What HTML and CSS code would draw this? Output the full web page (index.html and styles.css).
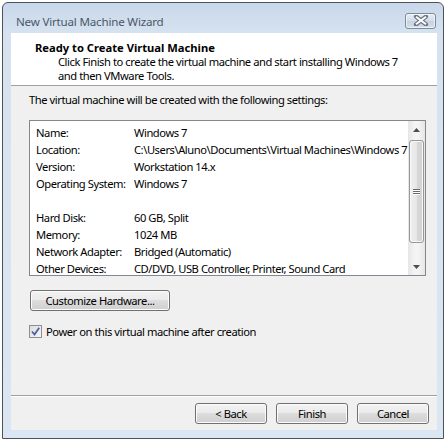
FILE: index.html
```html
<!DOCTYPE html>
<html>
<head>
<meta charset="utf-8">
<link rel="stylesheet" href="styles.css">
</head>
<body>
<div class="window">
  <div class="titlebar">
    <span class="title">New Virtual Machine Wizard</span>
    <span class="close">
      <svg width="16" height="11" viewBox="0 0 16 11"><path d="M3 1.5 L13 9.5 M13 1.5 L3 9.5" fill="none" stroke="#6d7684" stroke-width="4.2" stroke-linecap="round"/><path d="M3 1.8 L13 9.2 M13 1.8 L3 9.2" fill="none" stroke="#ffffff" stroke-width="2"/></svg>
    </span>
  </div>
  <div class="client">
    <div class="header">
      <div class="h-title">Ready to Create Virtual Machine</div>
      <div class="h-desc">Click Finish to create the virtual machine and start installing Windows 7<br>and then VMware Tools.</div>
    </div>
    <div class="body">
      <div class="intro">The virtual machine will be created with the following settings:</div>
      <div class="listbox">
        <div class="rows">
          <div class="row"><span class="lbl">Name:</span><span>Windows 7</span></div>
          <div class="row"><span class="lbl">Location:</span><span>C:\Users\Aluno\Documents\Virtual Machines\Windows 7</span></div>
          <div class="row"><span class="lbl">Version:</span><span>Workstation 14.x</span></div>
          <div class="row"><span class="lbl">Operating System:</span><span>Windows 7</span></div>
          <div class="row"></div>
          <div class="row"><span class="lbl">Hard Disk:</span><span>60 GB, Split</span></div>
          <div class="row"><span class="lbl">Memory:</span><span>1024 MB</span></div>
          <div class="row"><span class="lbl">Network Adapter:</span><span>Bridged (Automatic)</span></div>
          <div class="row"><span class="lbl">Other Devices:</span><span>CD/DVD, USB Controller, Printer, Sound Card</span></div>
        </div>
        <div class="scrollbar">
          <div class="arrow"><svg width="7" height="4" viewBox="0 0 7 4"><path d="M0 4 L3.5 0 L7 4Z" fill="#4d4d4d"/></svg></div>
          <div class="thumb"><span class="grip"></span><span class="grip"></span><span class="grip"></span></div>
          <div class="track"></div>
          <div class="arrow"><svg width="7" height="4" viewBox="0 0 7 4"><path d="M0 0 L3.5 4 L7 0Z" fill="#4d4d4d"/></svg></div>
        </div>
      </div>
      <button class="btn custom">Customize Hardware...</button>
      <label class="check">
        <span class="box"><svg width="11" height="11" viewBox="0 0 11 11"><path d="M2 5.5 L4.5 8.5 L9.2 1.8" fill="none" stroke="#4c61a8" stroke-width="1.8"/></svg></span>
        <span>Power on this virtual machine after creation</span>
      </label>
      <div class="footer">
        <button class="btn">&lt; Back</button>
        <button class="btn">Finish</button>
        <button class="btn">Cancel</button>
      </div>
    </div>
  </div>
</div>
</body>
</html>
```
FILE: styles.css
```css
html, body {
  margin: 0;
  padding: 0;
  background: #ffffff;
}
body {
  font-family: "Segoe UI", "Noto Sans", sans-serif;
  font-size: 11.2px;
  letter-spacing: -0.45px;
  color: #000;
}
.window {
  margin: 2px 0 0 2px;
  width: 440px;
  height: 435px;
  border: 1px solid #4e5358;
  border-radius: 6px 6px 0 0;
  background: linear-gradient(#c8d8ea 0px, #d6e2f0 30px, #dbe6f3 100%);
  display: flex;
  flex-direction: column;
}
.titlebar {
  height: 30px;
  display: flex;
  align-items: center;
  padding: 0 7px 0 13px;
}
.title {
  flex: 1;
  color: #4a586a;
  font-size: 11.6px;
  letter-spacing: -0.2px;
  margin-top: 7px;
}
.close {
  width: 29px;
  height: 14px;
  border: 1px solid #7f8a99;
  border-radius: 3px;
  background: linear-gradient(#e6edf5, #d3dce8 50%, #c7d2e1 51%, #d6dfea);
  display: flex;
  align-items: center;
  justify-content: center;
  margin-top: 5px;
  box-shadow: inset 0 0 0 1px rgba(255,255,255,0.6);
}
.client {
  margin: 0 6px 7px 8px;
  height: 397px;
  display: flex;
  flex-direction: column;
  background: #f0f0f0;
}
.header {
  height: 53px;
  box-sizing: border-box;
  background: #ffffff;
  border-bottom: 1px solid #a0a0a0;
  padding: 7px 0 0 24px;
}
.h-title {
  font-weight: bold;
  letter-spacing: 0;
  line-height: 15px;
}
.h-desc {
  line-height: 14px;
  padding-left: 23px;
}
.body {
  flex: 1;
  display: flex;
  flex-direction: column;
  padding: 7px 0 0 18px;
}
.intro {
  line-height: 13px;
}
.listbox {
  margin-top: 14px;
  width: 395px;
  height: 154px;
  border: 1px solid #828790;
  background: #fff;
  display: flex;
}
.rows {
  flex: 1;
  padding: 3px 0 0 6px;
}
.row {
  height: 17px;
  line-height: 17px;
  display: flex;
  white-space: nowrap;
}
.lbl {
  width: 98px;
  flex: none;
}
.scrollbar {
  width: 17px;
  display: flex;
  flex-direction: column;
  background: linear-gradient(90deg, #e6e6e6, #f4f4f4 40%, #f4f4f4 60%, #e6e6e6);
}
.arrow {
  height: 17px;
  display: flex;
  align-items: center;
  justify-content: center;
}
.thumb {
  margin: 2px 0 0 1px;
  width: 13px;
  height: 101px;
  border: 1px solid #979797;
  border-radius: 3px;
  background: linear-gradient(90deg, #f1f1f1, #e6e6e6 50%, #d8d8d8 51%, #d2d2d2);
  box-shadow: inset 0 0 0 1px #f8f8f8;
  display: flex;
  flex-direction: column;
  align-items: center;
  justify-content: center;
  gap: 1px;
}
.grip {
  width: 7px;
  height: 1px;
  background: #6a6a6a;
  box-shadow: 0 1px 0 #fff;
}
.track {
  flex: 1;
}
.btn {
  font-family: inherit;
  font-size: inherit;
  letter-spacing: inherit;
  color: #000;
  height: 21px;
  border: 1px solid #707070;
  border-radius: 3px;
  background: linear-gradient(#f2f2f2, #ebebeb 45%, #dddddd 50%, #cfcfcf);
  box-shadow: inset 0 0 0 1px #fcfcfc;
  padding: 0;
  margin: 0;
}
.custom {
  margin-top: 14px;
  margin-left: 1px;
  width: 140px;
}
.check {
  margin-top: 14px;
  display: flex;
  align-items: center;
  gap: 4px;
  line-height: 13px;
}
.box {
  width: 11px;
  height: 11px;
  border: 1px solid #8e8f8f;
  background: linear-gradient(135deg, #dcdcdc, #f6f6f6);
  display: flex;
}
.footer {
  margin: auto 0 0 -18px;
  border-top: 1px solid #a0a0a0;
  box-shadow: inset 0 1px 0 #ffffff;
  padding: 7px 8px 6px 0;
  display: flex;
  justify-content: flex-end;
  gap: 9px;
}
.footer .btn {
  width: 72px;
}
```
